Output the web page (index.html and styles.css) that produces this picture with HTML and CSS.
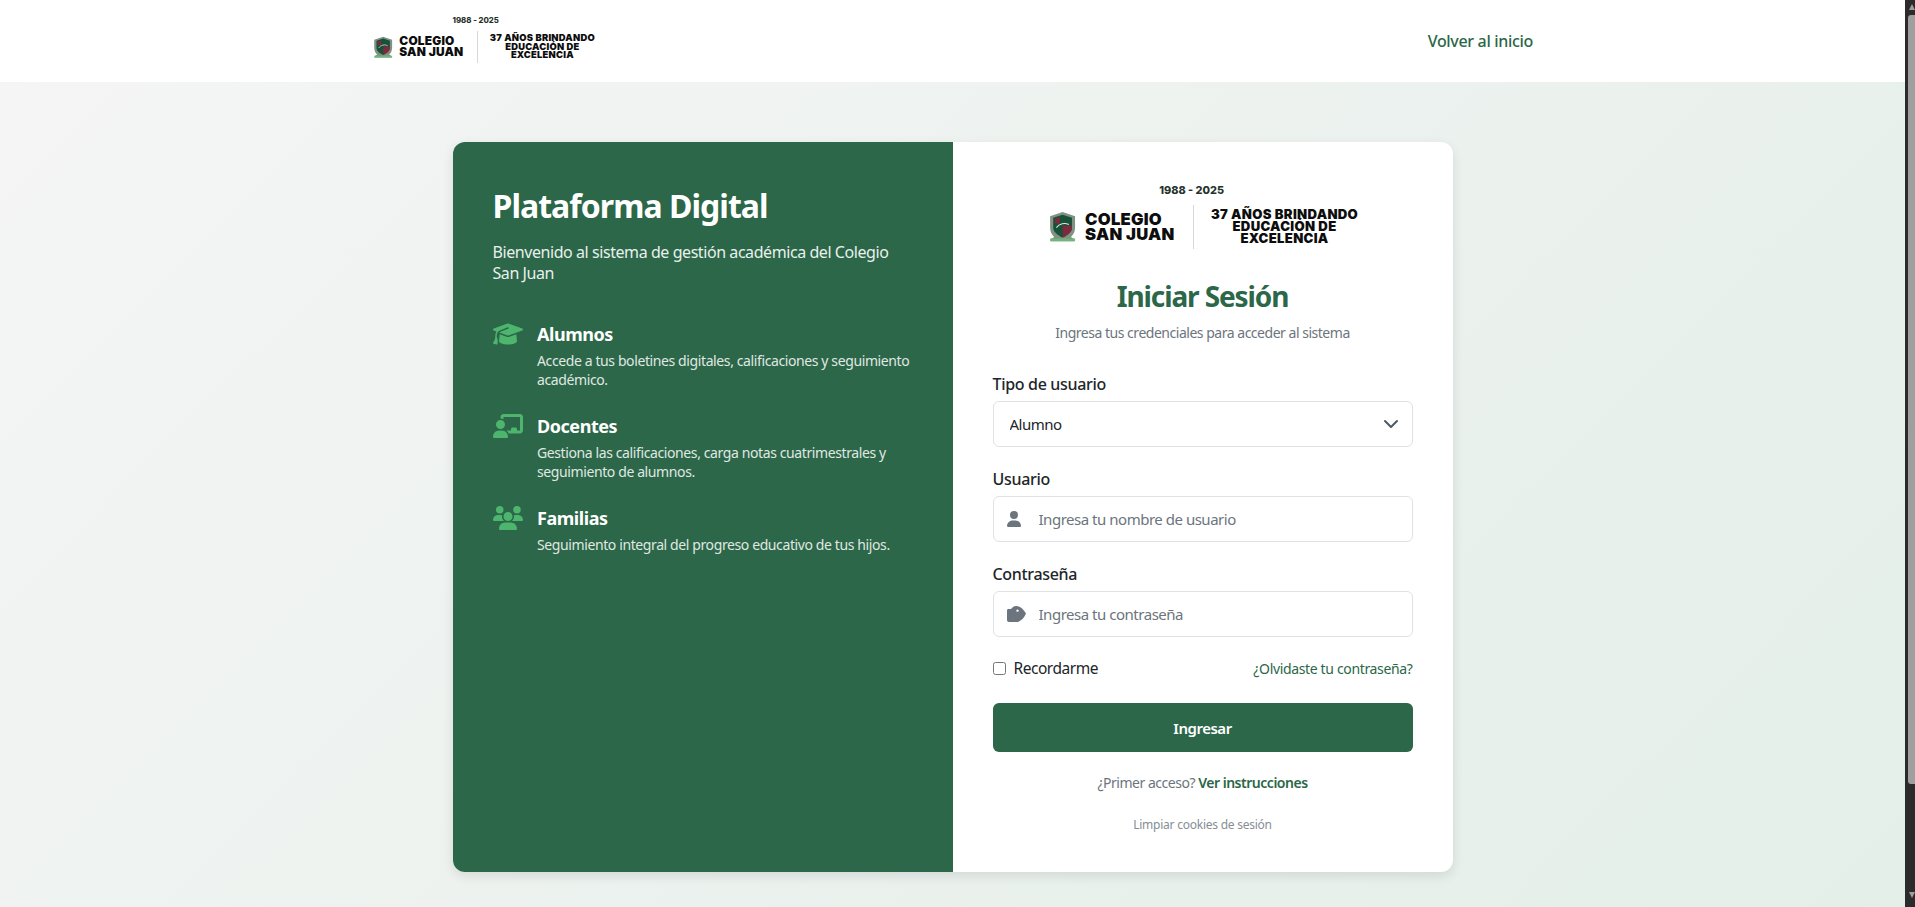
FILE: index.html
```html
<!DOCTYPE html>
<html lang="es">
<head>
<meta charset="utf-8">
<title>Plataforma Digital - Colegio San Juan</title>
<link rel="stylesheet" href="styles.css">
</head>
<body>
<div class="page">
  <header class="topbar">
    <div class="topbar-inner">
      <div class="logo logo-small">
        <div class="logo-years">1988 - 2025</div>
        <div class="logo-row">
          <svg class="crest" viewBox="0 0 30 30"><path fill="#7f9283" d="M3 5 15 1l12 4v11c0 4-2 7-4 9l3 2v2H4v-2l3-2c-2-2-4-5-4-9z"/><path fill="#17513a" d="M6 6.500 15 3.500l9 3V16c0 4-4 7-9 9.500C10 23 6 20 6 16z"/><path fill="#7d2a3c" d="M15 14h9v2c0 4-4 7-9 9.500z"/><path fill="#7d2a3c" d="M7.500 7.500l5-1.500v6h-5z"/><path fill="none" stroke="#e3e8dc" stroke-width="1" d="M9 16c3-4 8-5 12-3"/><path fill="#72b579" d="M3 26.500h24V29H3z"/></svg>
          <div class="logo-name">COLEGIO<br>SAN JUAN</div>
          <div class="logo-divider"></div>
          <div class="logo-tag">37 AÑOS BRINDANDO<br>EDUCACIÓN DE<br>EXCELENCIA</div>
        </div>
      </div>
      <a class="back-link" href="#">Volver al inicio</a>
    </div>
  </header>
  <main class="main">
    <section class="card">
      <div class="panel">
        <h1 class="panel-title">Plataforma Digital</h1>
        <p class="panel-lead">Bienvenido al sistema de gestión académica del Colegio San Juan</p>
        <ul class="features">
          <li class="feature">
            <svg class="feature-icon" viewBox="0 0 640 512"><path d="M320 32c-8.100 0-16.100 1.400-23.700 4.100L15.800 137.400C6.300 140.900 0 149.900 0 160s6.300 19.100 15.800 22.600l57.900 20.900C57.300 229.300 48 259.800 48 291.900v28.100c0 28.400-10.800 57.700-22.300 80.800-6.500 13-13.900 25.800-22.500 37.600C0 442.700-.9 448.300 .9 453.400s6 8.900 11.200 10.200l64 16c4.200 1.100 8.700 .3 12.400-2s6.300-6.100 7.100-10.400c8.600-42.800 4.300-81.200-2.100-108.700C90.300 344.300 86 329.800 80 316.500V291.900c0-30.200 10.200-58.700 27.900-81.500c12.900-15.500 29.600-28 49.200-35.700l157-61.700c8.200-3.200 17.500 .8 20.700 9s-.8 17.500-9 20.700l-157 61.700c-12.400 4.900-23.300 12.400-32.200 21.600l159.600 57.600c7.600 2.700 15.600 4.100 23.700 4.100s16.100-1.400 23.700-4.100L624.200 182.600c9.500-3.400 15.800-12.500 15.800-22.600s-6.300-19.100-15.800-22.600L343.700 36.100C336.100 33.400 328.100 32 320 32zM128 408c0 35.300 86 72 192 72s192-36.700 192-72L496.700 262.600 354.500 314c-11.100 4-22.800 6-34.500 6s-23.500-2-34.500-6L143.300 262.600 128 408z"/></svg>
            <div>
              <h2 class="feature-title">Alumnos</h2>
              <p class="feature-text">Accede a tus boletines digitales, calificaciones y seguimiento académico.</p>
            </div>
          </li>
          <li class="feature">
            <svg class="feature-icon" viewBox="0 0 640 512"><path d="M160 64c0-35.300 28.700-64 64-64H576c35.300 0 64 28.700 64 64V352c0 35.300-28.700 64-64 64H336.800c-11.800-25.500-29.900-47.500-52.400-64H384V320c0-17.700 14.300-32 32-32h64c17.700 0 32 14.300 32 32v32h64V64L224 64v49.100C205.200 102.200 183.300 96 160 96V64zm0 64a96 96 0 1 1 0 192 96 96 0 1 1 0-192zM133.300 352h53.300C260.200 352 320 411.800 320 485.300c0 14.700-11.900 26.700-26.700 26.700H26.700C11.900 512 0 500.100 0 485.300C0 411.800 59.700 352 133.300 352z"/></svg>
            <div>
              <h2 class="feature-title">Docentes</h2>
              <p class="feature-text">Gestiona las calificaciones, carga notas cuatrimestrales y seguimiento de alumnos.</p>
            </div>
          </li>
          <li class="feature">
            <svg class="feature-icon" viewBox="0 0 640 512"><path d="M144 0a80 80 0 1 1 0 160A80 80 0 1 1 144 0zM512 0a80 80 0 1 1 0 160A80 80 0 1 1 512 0zM0 298.700C0 239.800 47.800 192 106.700 192h42.700c15.900 0 31 3.500 44.600 9.700c-1.300 7.200-1.900 14.700-1.900 22.300c0 38.200 16.800 72.500 43.300 96c-.2 0-.4 0-.7 0H21.300C9.600 320 0 310.400 0 298.700zM405.300 320c-.2 0-.4 0-.7 0c26.600-23.500 43.300-57.800 43.300-96c0-7.600-.7-15-1.900-22.300c13.600-6.300 28.700-9.700 44.600-9.700h42.700C592.200 192 640 239.800 640 298.700c0 11.800-9.600 21.300-21.300 21.300H405.300zM224 224a96 96 0 1 1 192 0 96 96 0 1 1 -192 0zM128 485.300C128 411.700 187.700 352 261.300 352H378.700C452.300 352 512 411.700 512 485.300c0 14.700-11.900 26.700-26.700 26.700H154.700c-14.700 0-26.700-11.900-26.700-26.700z"/></svg>
            <div>
              <h2 class="feature-title">Familias</h2>
              <p class="feature-text">Seguimiento integral del progreso educativo de tus hijos.</p>
            </div>
          </li>
        </ul>
      </div>
      <form class="login">
        <div class="logo logo-large">
          <div class="logo-years">1988 - 2025</div>
          <div class="logo-row">
            <svg class="crest" viewBox="0 0 30 30"><path fill="#7f9283" d="M3 5 15 1l12 4v11c0 4-2 7-4 9l3 2v2H4v-2l3-2c-2-2-4-5-4-9z"/><path fill="#17513a" d="M6 6.500 15 3.500l9 3V16c0 4-4 7-9 9.500C10 23 6 20 6 16z"/><path fill="#7d2a3c" d="M15 14h9v2c0 4-4 7-9 9.500z"/><path fill="#7d2a3c" d="M7.500 7.500l5-1.500v6h-5z"/><path fill="none" stroke="#e3e8dc" stroke-width="1" d="M9 16c3-4 8-5 12-3"/><path fill="#72b579" d="M3 26.500h24V29H3z"/></svg>
            <div class="logo-name">COLEGIO<br>SAN JUAN</div>
            <div class="logo-divider"></div>
            <div class="logo-tag">37 AÑOS BRINDANDO<br>EDUCACIÓN DE<br>EXCELENCIA</div>
          </div>
        </div>
        <h2 class="login-title">Iniciar Sesión</h2>
        <p class="login-sub">Ingresa tus credenciales para acceder al sistema</p>

        <label class="field-label" for="tipo">Tipo de usuario</label>
        <div class="control">
          <select class="input select" id="tipo"><option>Alumno</option></select>
          <svg class="chevron" viewBox="0 0 16 16"><path d="M2 5l6 6 6-6"/></svg>
        </div>

        <label class="field-label" for="usuario">Usuario</label>
        <div class="control">
          <svg class="input-icon user-icon" viewBox="0 0 448 512"><path d="M224 256A128 128 0 1 0 224 0a128 128 0 1 0 0 256zm-45.700 48C79.800 304 0 383.800 0 482.300C0 498.700 13.300 512 29.700 512H418.300c16.400 0 29.700-13.300 29.700-29.700C448 383.800 368.200 304 269.700 304H178.300z"/></svg>
          <input class="input with-icon" id="usuario" type="text" placeholder="Ingresa tu nombre de usuario">
        </div>

        <label class="field-label" for="clave">Contraseña</label>
        <div class="control">
          <svg class="input-icon key-icon" viewBox="0 0 19 16"><path fill-rule="evenodd" d="M0 4.500C0 3.500.6 3 1.500 3H4L6 1C7 .2 8 0 9 0 13 0 16.500 3 19 7.500 17.500 11.500 14.500 14.500 11 16H2C.8 16 0 15.200 0 14zM10.500 3.400a1.200 1.200 0 1 0 .01 0z"/></svg>
          <input class="input with-icon" id="clave" type="password" placeholder="Ingresa tu contraseña">
        </div>

        <div class="options">
          <label class="remember"><input class="check" type="checkbox">Recordarme</label>
          <a class="forgot" href="#">¿Olvidaste tu contraseña?</a>
        </div>

        <button class="submit" type="button">Ingresar</button>
        <p class="first-access">¿Primer acceso? <a href="#">Ver instrucciones</a></p>
        <p class="clear-cookies">Limpiar cookies de sesión</p>
      </form>
    </section>
  </main>
</div>
<div class="scrollbar" aria-hidden="true">
  <span class="arrow arrow-up"></span>
  <span class="thumb"></span>
  <span class="arrow arrow-down"></span>
</div>
</body>
</html>
```

FILE: styles.css
```css
* { box-sizing: border-box; }
html, body { margin: 0; height: 100%; overflow: hidden; }
body {
  display: flex;
  font-family: "Noto Sans", "Open Sans", sans-serif;
  color: #212529;
  letter-spacing: -0.03em;
}
a { text-decoration: none; }
h1, h2, p, ul { margin: 0; padding: 0; }

.page {
  flex: 1;
  min-width: 0;
  height: 907px;
  display: flex;
  flex-direction: column;
  background: linear-gradient(135deg, #f5f5f5 0%, #e4efe9 100%);
}

/* top bar */
.topbar { height: 82px; flex: none; background: #fff; }
.topbar-inner {
  width: 1161px;
  margin: 0 auto;
  height: 100%;
  display: flex;
  align-items: center;
  justify-content: space-between;
}
.back-link { color: #2b6748; font-size: 16px; font-weight: 500; letter-spacing: -0.02em; }

/* logo */
.logo { display: flex; flex-direction: column; font-family: "Inter", "Liberation Sans", sans-serif; letter-spacing: 0; color: #0d0d0d; }
.logo-large { font-size: 16px; align-items: center; align-self: center; }
.logo-small { font-size: 11.460px; align-items: center; padding-bottom: 3px; }
.logo-years { font-size: 0.680em; font-weight: 800; color: #26332c; line-height: 1.200; margin-right: 2em; }
.logo-row { display: flex; align-items: center; margin-top: 0.500em; }
.crest { width: 1.950em; height: 1.950em; flex: none; }
.logo-name { font-size: 1.040em; line-height: 0.920; font-weight: 900; margin-left: 0.420em; letter-spacing: 0.015em; }
.logo-divider { width: 1px; height: 2.750em; background: #d8d8d8; margin: 0 1.060em 0 1.150em; }
.logo-tag { font-size: 0.820em; line-height: 0.910; font-weight: 900; text-align: center; letter-spacing: 0.025em; }

/* main */
.main { flex: 1; padding-top: 60px; display: flex; justify-content: center; align-items: flex-start; }
.card {
  width: 1000px;
  height: 730px;
  display: flex;
  border-radius: 12px;
  overflow: hidden;
  background: #fff;
  box-shadow: 0 4px 12px rgba(0, 0, 0, 0.1);
}

/* left panel */
.panel { width: 500px; flex: none; background: #2b6748; color: #fff; padding: 40px; }
.panel-title { font-size: 32px; font-weight: 700; line-height: 48px; margin-bottom: 12px; letter-spacing: -0.03em; }
.panel-lead { font-size: 16px; line-height: 21px; opacity: .9; margin-bottom: 38px; letter-spacing: -0.027em; }
.features { list-style: none; display: flex; flex-direction: column; gap: 25px; }
.feature { display: flex; gap: 14.500px; }
.feature-icon { width: 30px; height: 24px; flex: none; fill: #4db56e; }
.feature-title { font-size: 18px; font-weight: 700; line-height: 25px; margin-bottom: 4px; letter-spacing: -0.025em; }
.feature-text { font-size: 14px; line-height: 19px; opacity: .85; letter-spacing: -0.028em; }

/* login */
.login { width: 500px; flex: none; padding: 42px 40px; display: flex; flex-direction: column; }
.login-title { font-size: 28px; font-weight: 700; color: #2b6748; text-align: center; line-height: 38px; margin-top: 28px; letter-spacing: -0.04em; }
.login-sub { font-size: 14px; color: #6c757d; text-align: center; line-height: 19px; margin-top: 8px; margin-bottom: 31px; }
.field-label { font-size: 16px; font-weight: 500; line-height: 22px; margin-bottom: 6px; letter-spacing: -0.02em; }
.control { position: relative; margin-bottom: 21px; }
.input {
  display: block;
  width: 100%;
  height: 46px;
  border: 1px solid #dee2e6;
  border-radius: 6px;
  background: #fff;
  color: #212529;
  font: inherit;
  font-size: 15px;
  letter-spacing: inherit;
  padding: 0 16px;
}
.input::placeholder { color: #6c757d; opacity: 1; }
.select { appearance: none; -webkit-appearance: none; }
.with-icon { padding-left: 45px; }
.chevron { position: absolute; right: 14px; top: 15px; width: 16px; height: 16px; fill: none; stroke: #4e5a66; stroke-width: 2; stroke-linecap: round; stroke-linejoin: round; }
.input-icon { position: absolute; left: 14px; fill: #6c757d; }
.user-icon { top: 15px; width: 14px; height: 16px; }
.key-icon { top: 15px; width: 19px; height: 16px; }

.options { display: flex; justify-content: space-between; align-items: center; height: 24px; margin-bottom: 24px; margin-top: -1px; }
.remember { display: flex; align-items: center; font-size: 15.500px; letter-spacing: -0.03em; }
.check { width: 13px; height: 13px; margin: 0 8px 0 0; }
.forgot { font-size: 14px; color: #2b6748; letter-spacing: -0.025em; }

.submit {
  height: 49px;
  flex: none;
  border: 0;
  border-radius: 6px;
  background: #2b6748;
  color: #fff;
  font: inherit;
  font-size: 15px;
  font-weight: 600;
  letter-spacing: inherit;
}
.first-access { font-size: 14px; color: #6c757d; text-align: center; line-height: 19px; margin-top: 21px; }
.first-access a { color: #2b6748; font-weight: 600; }
.clear-cookies { font-size: 12px; color: #868e96; text-align: center; line-height: 16px; margin-top: 25px; letter-spacing: -0.02em; }

/* window scrollbar */
.scrollbar { width: 10px; flex: none; height: 907px; background: #2b2b2b; display: flex; flex-direction: column; align-items: flex-end; }
.thumb { width: 7px; height: 769px; background: #9f9f9f; border-radius: 3px 0 0 3px; margin-top: 5px; }
.arrow { width: 0; height: 0; border-left: 3.500px solid transparent; border-right: 3.500px solid transparent; }
.arrow-up { margin-top: 4px; border-bottom: 6px solid #9f9f9f; }
.arrow-down { margin-top: 108px; border-top: 6px solid #9f9f9f; }
```
